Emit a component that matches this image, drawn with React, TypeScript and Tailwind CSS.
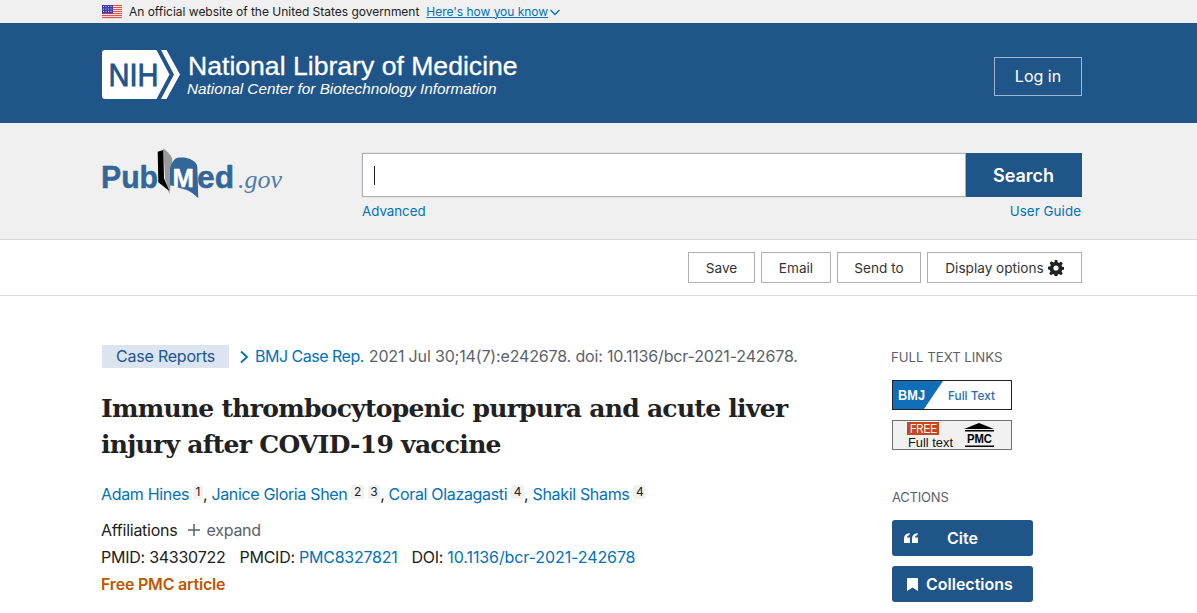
import React from "react";

const sans = "font-['Inter','Liberation_Sans',sans-serif]";

function Flag() {
  return (
    <svg width="20" height="14" viewBox="0 0 20 14" className="shrink-0">
      <rect width="20" height="14" fill="#fff" />
      {[0, 2, 4, 6, 8, 10, 12].map((y) => (
        <rect key={y} y={y} width="20" height="1.200" fill="#e2564a" />
      ))}
      <rect width="11" height="8.500" fill="#3c3bb0" />
      {[1.500, 4, 6.500].map((y) =>
        [1.500, 4, 6.500, 9].map((x) => <circle key={`${x}-${y}`} cx={x} cy={y} r="0.500" fill="#fff" />)
      )}
    </svg>
  );
}

function NihLogo() {
  return (
    <svg width="78" height="50" viewBox="0 0 78 50" className="shrink-0 -mt-[2px]">
      <path d="M3 0H54.500L67.500 24.500 54.500 49H3Q0 49 0 46V3Q0 0 3 0Z" fill="#fff" />
      <path d="M59 0H64.500L78 24.500 64.500 49H59L72 24.500Z" fill="#fff" />
      <text x="6.500" y="36" fontFamily="'Liberation Sans',sans-serif" fontSize="31" fontWeight="400" fill="#20558a" stroke="#20558a" strokeWidth="0.800" textLength="50" lengthAdjust="spacingAndGlyphs">NIH</text>
    </svg>
  );
}

function PubMedLogo() {
  return (
    <svg width="184" height="56" viewBox="0 0 184 56" className="shrink-0 overflow-visible">
      <text x="0" y="39" fontFamily="'Liberation Sans',sans-serif" fontWeight="700" fontSize="32" fill="#336699" stroke="#336699" strokeWidth="0.500" textLength="57" lengthAdjust="spacingAndGlyphs">Pub</text>
      <path d="M62.300 -0.700C67 3 70 6 71.300 10L70.700 29.300L68.300 45.300L64 29.300Z" fill="#9a9a9a" />
      <path d="M56.700 2.700L62.300 1L63 29.300L68.300 42L57.300 33.300Z" fill="#000" />
      <path d="M69 19.300C71 13 73 10 76.300 8.700C82 8 86 8.500 89 10C93 12 96 14 96.300 17.700L97.300 49.300C93 45 90 43 85.700 41C80 39 74 38 69 36Z" fill="#336699" />
      <text x="71.500" y="37.700" fontFamily="'Liberation Sans',sans-serif" fontWeight="700" fontSize="26" fill="#fff" stroke="#fff" strokeWidth="0.400" textLength="21.500" lengthAdjust="spacingAndGlyphs">M</text>
      <text x="96" y="39" fontFamily="'Liberation Sans',sans-serif" fontWeight="700" fontSize="32" fill="#336699" stroke="#336699" strokeWidth="0.500" textLength="37" lengthAdjust="spacingAndGlyphs">ed</text>
      <text x="137" y="39" fontFamily="'Liberation Serif',serif" fontStyle="italic" fontSize="26" fill="#4f7cab">.gov</text>
    </svg>
  );
}

function Gear() {
  return (
    <svg width="16" height="16" viewBox="0 0 16 16">
      <path fill="#212121" d="M6.700 0h2.600l.4 2.300 1.300.6 2-1.300 1.800 1.800-1.300 2 .6 1.300 2.300.4v2.600l-2.300.4-.6 1.300 1.300 2-1.800 1.800-2-1.300-1.300.6-.4 2.300H6.700l-.4-2.300-1.300-.6-2 1.300-1.800-1.800 1.300-2-.6-1.300L0 9.300V6.700l2.300-.4.6-1.300-1.300-2L3.400 1.200l2 1.300 1.300-.6z" />
      <circle cx="8" cy="8" r="2.600" fill="#fff" />
    </svg>
  );
}

function ToolButton({ children, w }: { children: React.ReactNode; w: string }) {
  return (
    <button className={`${w} h-[31px] pt-[1px] border border-[#aeb0b5] bg-white text-[13.600px] text-[#333] flex items-center justify-center gap-1`}>
      {children}
    </button>
  );
}

function Sup({ n }: { n: string }) {
  return (
    <span className="inline-block relative -top-[4px] ml-[4px] bg-[#f1f1f1] rounded-[2px] px-[2.500px] text-[12px] leading-[14px] tracking-normal text-[#212121]">{n}</span>
  );
}

function Author({ name }: { name: string }) {
  return <a className="text-[#0071bc]">{name}</a>;
}

export default function App() {
  return (
    <div className={`${sans} w-[1197px] h-[613px] overflow-hidden bg-white text-[#212121]`}>
      <div className="h-[23px] bg-[#f0f0f0] pl-[102px] flex items-center gap-[7px] text-[12px]">
        <Flag />
        <span className="text-[#212121] tracking-[-0.02px]">An official website of the United States government</span>
        <a className="flex items-center text-[#0071bc] tracking-[-0.03px]">
          <span className="underline">Here's how you know</span>
          <svg width="12" height="12" viewBox="0 0 12 12" className="ml-[1px]"><path d="M1.500 4l4.500 4.500L10.500 4" fill="none" stroke="#0071bc" strokeWidth="1.300" /></svg>
        </a>
      </div>

      <header className="h-[100px] bg-[#20558a] pl-[102px] pr-[115px] pt-[5px] flex items-center justify-between">
        <div className="flex items-center gap-[8px]">
          <NihLogo />
          <div className="text-white -mt-[3px] font-['Liberation_Sans',sans-serif]">
            <div className="text-[26.600px] leading-[30px] [-webkit-text-stroke:0.3px_#fff]">National Library of Medicine</div>
            <div className="text-[15.300px] leading-[16px] italic -ml-[1px]">National Center for Biotechnology Information</div>
          </div>
        </div>
        <button className="mt-[1px] w-[88px] h-[39px] border border-[#9cb8d3] text-white text-[16px]">Log in</button>
      </header>

      <div className="h-[117px] bg-[#f0f0f0] border-b border-[#d6d6d6] pl-[101px] pr-[115px] flex">
        <div className="w-[261px] pt-[26px]"><PubMedLogo /></div>
        <div className="flex-1 pt-[30px]">
          <div className="flex h-[44px]">
            <div className="flex-1 bg-white border border-[#aeb0b5] flex items-center pl-[11px] shadow-[0_0_1px_#aaa]">
              <span className="w-px h-[19px] bg-[#212121]" />
            </div>
            <button className="w-[116px] bg-[#20558a] text-white font-semibold text-[18px] pr-[1px]">Search</button>
          </div>
          <div className="flex justify-between text-[13.300px] text-[#0071bc] mt-[5px] leading-[18px]">
            <a>Advanced</a>
            <a className="mr-[1px] tracking-[0.1px]">User Guide</a>
          </div>
        </div>
      </div>

      <div className="h-[56px] border-b border-[#dcdcdc] pl-[101px] pr-[115px] pt-[12px] flex justify-end gap-[6px]">
        <ToolButton w="w-[67px]">Save</ToolButton>
        <ToolButton w="w-[70px]">Email</ToolButton>
        <ToolButton w="w-[84px]">Send to</ToolButton>
        <ToolButton w="w-[155px]">Display options <Gear /></ToolButton>
      </div>

      <main className="pl-[101px] pr-[115px] flex">
        <div className="w-[790px] pt-[49px]">
          <div className="flex items-center h-[23px] text-[16px] leading-[23px]">
            <span className="ml-[1px] w-[127px] h-[23px] bg-[#dce4ef] text-center text-[#205493] tracking-[-0.2px]">Case Reports</span>
            <svg width="10" height="14" viewBox="0 0 10 14" className="ml-[10px] mr-[6px]"><path d="M2 1.500L8 7l-6 5.500" fill="none" stroke="#0071bc" strokeWidth="1.800" /></svg>
            <a className="text-[#0071bc] tracking-[-0.5px]">BMJ Case Rep.</a>
            <span className="ml-[5px] text-[#5b616b] tracking-[-0.16px]">2021 Jul 30;14(7):e242678. doi: 10.1136/bcr-2021-242678.</span>
          </div>
          <h1 className="mt-[23px] font-['DejaVu_Serif',serif] font-bold text-[25px] leading-[36px] tracking-[-0.72px] text-[#212121]">
            Immune thrombocytopenic purpura and acute liver<br />injury after COVID-19 vaccine
          </h1>
          <div className="mt-[19px] text-[16px] leading-[24px] tracking-[-0.33px] whitespace-nowrap">
            <Author name="Adam Hines" /><Sup n="1" />, <Author name="Janice Gloria Shen" /><Sup n="2" /><Sup n="3" />, <Author name="Coral Olazagasti" /><Sup n="4" />, <Author name="Shakil Shams" /><Sup n="4" />
          </div>
          <div className="mt-[12px] flex items-center text-[16px] leading-[24px] tracking-[-0.25px]">
            <span>Affiliations</span>
            <svg width="12" height="12" viewBox="0 0 12 12" className="ml-[11px] mr-[6px]"><path d="M6 0v12M0 6h12" stroke="#5b616b" strokeWidth="1.500" /></svg>
            <span className="text-[#5b616b]">expand</span>
          </div>
          <div className="mt-[3px] text-[16px] leading-[24px] tracking-[-0.25px] whitespace-nowrap">
            <span>PMID: 34330722</span>
            <span className="ml-[14px]">PMCID: </span><a className="text-[#0071bc]">PMC8327821</a>
            <span className="ml-[14px]">DOI: </span><a className="text-[#0071bc] tracking-[-0.1px]">10.1136/bcr-2021-242678</a>
          </div>
          <div className="mt-[3px] text-[16px] leading-[24px] font-semibold text-[#c05600] tracking-[-0.2px]">Free PMC article</div>
        </div>

        <aside className="w-[191px] pt-[53px]">
          <h3 className="text-[13.200px] leading-[16px] text-[#5b616b]">FULL TEXT LINKS</h3>
          <a className="ml-[1px] mt-[15px] block w-[120px] h-[30px] border border-[#212121] relative overflow-hidden bg-white">
            <svg width="118" height="28" viewBox="0 0 118 28" className="block">
              <path d="M0 0H50L31 28H0Z" fill="#0f6eb8" />
              <text x="5" y="19" fontFamily="'Liberation Sans',sans-serif" fontWeight="700" fontSize="14" fill="#fff" textLength="27" lengthAdjust="spacingAndGlyphs">BMJ</text>
              <text x="55" y="19" fontFamily="Inter,sans-serif" fontWeight="500" fontSize="12" fill="#2b6cb8" textLength="47" lengthAdjust="spacingAndGlyphs">Full Text</text>
            </svg>
          </a>
          <a className="ml-[1px] mt-[10px] block w-[120px] h-[30px] border border-[#6f6f6f] bg-[#f1f1f1]">
            <svg width="118" height="28" viewBox="0 0 118 28" className="block">
              <rect x="14" y="1" width="32" height="13" fill="#c8451d" />
              <text x="17" y="12" fontFamily="'Liberation Sans',sans-serif" fontSize="12" fill="#fff" textLength="27" lengthAdjust="spacingAndGlyphs">FREE</text>
              <text x="15" y="26" fontFamily="'Liberation Sans',sans-serif" fontSize="12.500" fill="#111" textLength="45" lengthAdjust="spacingAndGlyphs">Full text</text>
              <path d="M86 2L101 8H71Z" fill="#000" />
              <rect x="72" y="9" width="29" height="1.500" fill="#000" />
              <text x="74" y="22" fontFamily="'Liberation Sans',sans-serif" fontWeight="700" fontSize="12" fill="#000" textLength="25" lengthAdjust="spacingAndGlyphs">PMC</text>
              <rect x="72" y="24.500" width="29" height="1.500" fill="#000" />
            </svg>
          </a>
          <h3 className="ml-[1px] mt-[39px] text-[13px] leading-[16px] text-[#5b616b] tracking-[-0.2px]">ACTIONS</h3>
          <button className="ml-[1px] mt-[15px] w-[141px] h-[36px] rounded-[3px] bg-[#20558a] text-white font-semibold text-[16px] flex items-center pl-[12px]">
            <svg width="14" height="10" viewBox="0 0 14 10" className="shrink-0">
              <path d="M0 10V5.500C0 2.500 2 .5 5.500 0v2C3.800 2.500 3 3.300 3 4.500h3V10ZM8 10V5.500C8 2.500 10 .5 13.500 0v2C11.800 2.500 11 3.300 11 4.500h3V10Z" fill="#fff" />
            </svg>
            <span className="ml-[29px]">Cite</span>
          </button>
          <button className="ml-[1px] mt-[10px] w-[141px] h-[36px] rounded-[3px] bg-[#20558a] text-white font-semibold text-[16px] flex items-center pl-[15px]">
            <svg width="11" height="13" viewBox="0 0 11 13" className="shrink-0"><path d="M1 0H10A1 1 0 0 1 11 1V13L5.500 9.500 0 13V1A1 1 0 0 1 1 0Z" fill="#fff" /></svg>
            <span className="ml-[8px]">Collections</span>
          </button>
        </aside>
      </main>
    </div>
  );
}
